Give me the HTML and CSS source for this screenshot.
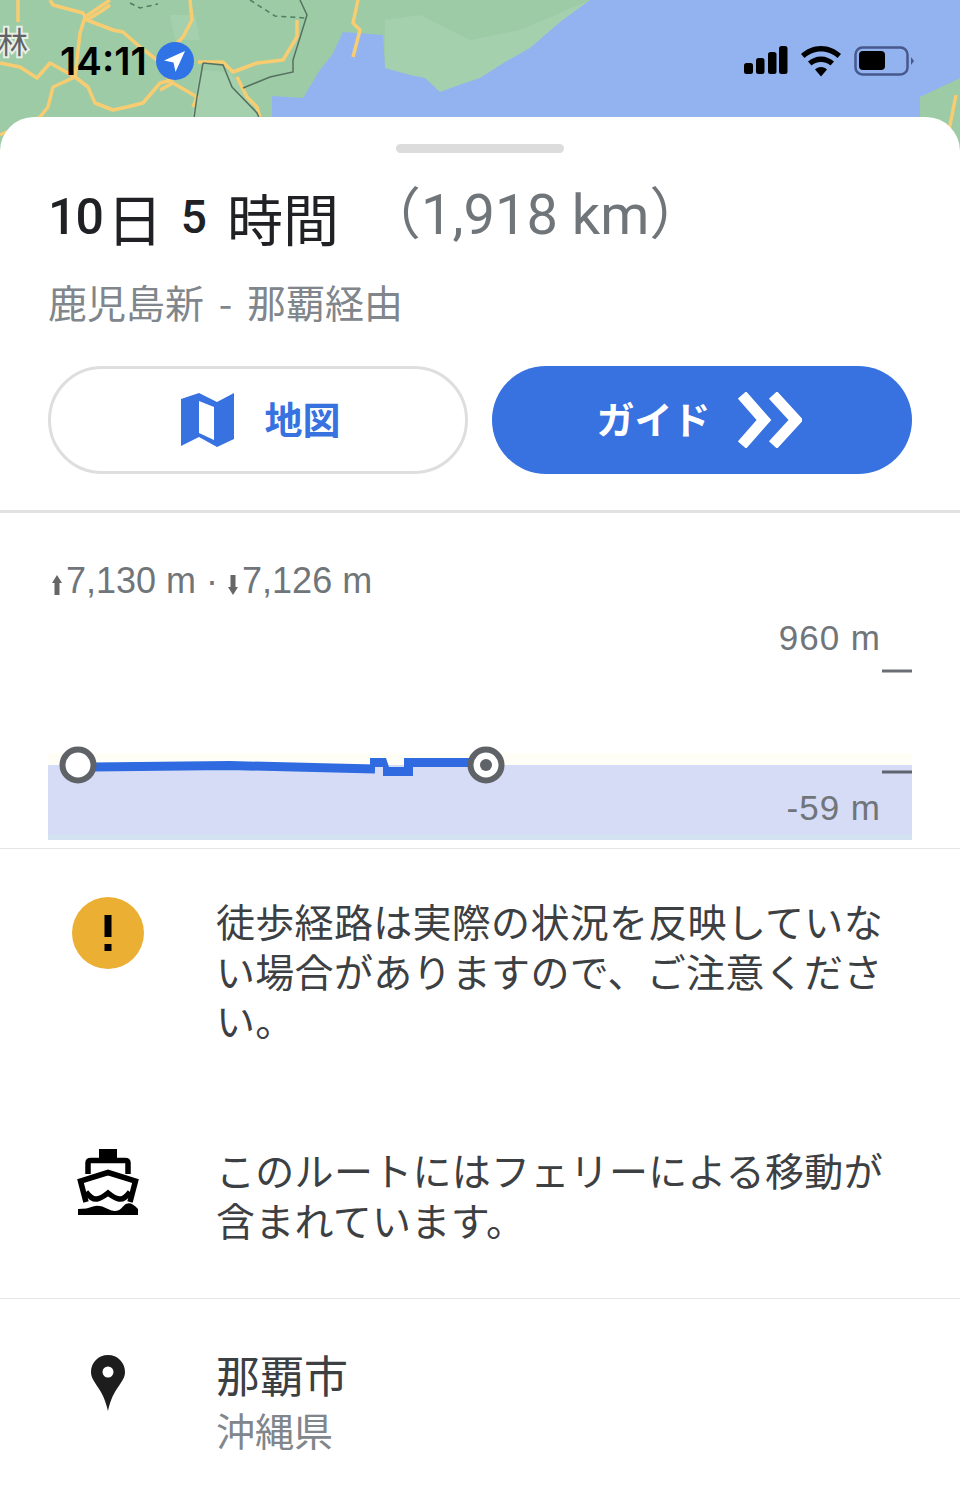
FILE: index.html
```html
<!DOCTYPE html>
<html lang="ja">
<head>
<meta charset="utf-8">
<title>ルート</title>
<link rel="stylesheet" href="styles.css">
</head>
<body>
<header class="map">
  <svg class="map-art" viewBox="0 0 960 160" width="960" height="160" aria-hidden="true">
    <defs><filter id="soft"><feGaussianBlur stdDeviation="0.5"/></filter></defs>
    <g filter="url(#soft)">
    <rect width="960" height="160" fill="#9ccba6"/>
    <path class="land-light" d="M200 70L230 72L250 100L262 125L190 125Z"/>
    <path class="land-light" d="M385 20L420 15L470 40L520 30L590 0L500 75L440 92L385 70Z"/>
    <path class="land-light" d="M170 15L195 15L200 40L175 40Z"/>
    <path class="water" d="M590 0L560 22L530 48L505 62L480 78L462 84L440 92L425 78L410 75L385 68L383 35L343 32L332 55L320 70L303 98L272 96L272 160L920 160L920 97L960 80L960 0Z"/>
    <path class="land" d="M960 78L920 97L920 160L960 160Z"/>
    <g class="road">
      <path d="M50 0L53 5L83 13L87 20L113 30L123 32L140 47L157 60"/>
      <path d="M110 0L85 17L80 33L75 77L53 87L48 107L40 117L0 135"/>
      <path d="M0 63L20 67L37 78L50 63L75 77L88 87L95 103L113 110L127 107L143 103L160 83L173 80"/>
      <path d="M190 0L192 20L183 37L175 45"/>
      <path d="M198 62L223 62L233 72L257 63L283 60L297 37L297 20"/>
      <path d="M237 77L247 97L257 107L262 125"/>
      <path d="M358 0L353 23L360 30L353 57"/>
      <path d="M173 83L197 97L193 107"/>
      <path d="M18 0L18 22"/>
      <path d="M87 20L100 12L110 5"/>
      <path d="M160 70L173 83L160 90"/>
      <path d="M956 95L948 135"/>
    </g>
    <g class="border">
      <path d="M300 0L307 15L293 60L293 72L270 77L243 88"/>
      <path d="M203 63L197 97L193 125"/>
      <path d="M203 63L223 65L232 87L257 113L262 125"/>
    </g>
    <path class="dashed" d="M130 3L140 8L158 4M250 0L275 16L305 18"/>
    </g>
    <text class="map-label" x="-2" y="53">林</text>
  </svg>
  <div class="status">
    <div class="status-left">
      <span class="clock">14:11</span>
      <svg class="loc" viewBox="0 0 38 38" width="38" height="38" aria-hidden="true">
        <circle cx="19" cy="19" r="19" fill="#2f73e6"/>
        <path d="M29 9L8 18.500L17.500 20.500L19.500 30Z" fill="#fff"/>
      </svg>
    </div>
    <div class="status-right">
      <svg viewBox="0 0 44 28" width="44" height="28" aria-hidden="true">
        <rect x="0" y="17" width="9" height="11" rx="2.500"/>
        <rect x="12" y="12" width="8.500" height="16" rx="2.500"/>
        <rect x="24" y="6" width="8.500" height="22" rx="2.500"/>
        <rect x="35" y="0" width="8.500" height="28" rx="2.500"/>
      </svg>
      <svg viewBox="0 0 40 31" width="40" height="31" aria-hidden="true">
        <path d="M20 0C12 0 5.500 3 0 8L3.500 12C8 8 13.500 5.500 20 5.500S32 8 36.500 12L40 8C34.500 3 28 0 20 0Z"/>
        <path d="M20 10.500C15 10.500 10.500 12.500 7 15.500L10.500 19.500C13 17.500 16 16 20 16S27 17.500 29.500 19.500L33 15.500C29.500 12.500 25 10.500 20 10.500Z"/>
        <path d="M20 21C17.500 21 15.500 22 14 23.500L20 30.500L26 23.500C24.500 22 22.500 21 20 21Z"/>
      </svg>
      <svg viewBox="0 0 60 30" width="60" height="30" aria-hidden="true">
        <rect x="1.500" y="1.500" width="52" height="27" rx="7" fill="none" stroke="#46588c" stroke-width="2.500"/>
        <rect x="5" y="5" width="26" height="19" rx="4"/>
        <path d="M57 11L60 15L57 19Z" fill="#46588c"/>
      </svg>
    </div>
  </div>
</header>

<main class="sheet">
  <div class="handle"></div>

  <section class="summary">
    <h1 class="title"><span class="num">10</span><span class="day">日</span><span class="num five">5</span><span>時間</span><span class="distance">（1,918 km）</span></h1>
    <p class="via">鹿児島新 - 那覇経由</p>
    <div class="actions">
      <button class="btn btn-map" type="button">
        <svg viewBox="0 0 54 56" width="54" height="56" aria-hidden="true">
          <path fill-rule="evenodd" d="M0 7L18 1L36 10L53 1V47L36 55L18 45L0 54ZM18 9V41L33 48V15Z" fill="#3871e0"/>
        </svg>
        <span class="btn-label">地図</span>
      </button>
      <button class="btn btn-guide" type="button">
        <span class="btn-label">ガイド</span>
        <svg viewBox="0 0 64 56" width="64" height="56" aria-hidden="true">
          <path d="M4 3L26 28L4 53" fill="none" stroke="#fff" stroke-width="11"/>
          <path d="M35 3L58 28L35 53" fill="none" stroke="#fff" stroke-width="11"/>
        </svg>
      </button>
    </div>
  </section>

  <section class="elevation">
    <p class="stats"><svg class="arrow" viewBox="0 0 10 20" width="10" height="20" aria-hidden="true"><path d="M5 0L10 8H7.500V20H2.500V8H0Z"/></svg>7,130 m · <svg class="arrow" viewBox="0 0 10 20" width="10" height="20" aria-hidden="true"><path d="M5 20L10 12H7.500V0H2.500V12H0Z"/></svg>7,126 m</p>
    <div class="chart">
      <svg viewBox="0 0 960 230" width="960" height="230" aria-hidden="true">
        <rect x="48" y="143" width="864" height="12" fill="#fffef6"/>
        <rect x="48" y="155" width="864" height="70" fill="#d6dcf6"/>
        <rect x="48" y="225" width="864" height="5" fill="#d2e2f0"/>
        <rect x="882" y="59.500" width="30" height="3" fill="#6b6f75"/>
        <rect x="882" y="160.500" width="30" height="3" fill="#5f6670"/>
        <path d="M92 157L230 155.500L375 159" fill="none" stroke="#2f6ae0" stroke-width="9"/>
        <path d="M370 148H386L389 157H412V166H383V157H370ZM404 148H472V157H413V166H404Z" fill="#2f6ae0"/>
        <circle cx="78" cy="155" r="15.500" fill="#fff" stroke="#5f6368" stroke-width="6"/>
        <circle cx="486" cy="155" r="15.500" fill="#fff" stroke="#5f6368" stroke-width="6"/>
        <circle cx="486" cy="155" r="6" fill="#5f6368"/>
      </svg>
      <span class="chart-label chart-max">960 m</span>
      <span class="chart-label chart-min">-59 m</span>
    </div>
  </section>

  <section class="notes">
    <div class="row row-warning">
      <div class="row-icon">
        <svg class="warn" viewBox="0 0 72 72" width="72" height="72" aria-hidden="true">
          <circle cx="36" cy="36" r="36" fill="#ebb033"/>
          <rect x="32.500" y="18" width="7" height="22" fill="#000"/>
          <rect x="32.500" y="47" width="7" height="7" fill="#000"/>
        </svg>
      </div>
      <p class="row-text">徒歩経路は実際の状況を反映していない場合がありますので、ご注意ください。</p>
    </div>
    <div class="row row-ferry">
      <div class="row-icon">
        <svg viewBox="0 0 62 68" width="62" height="68" aria-hidden="true">
          <path d="M22 0H40V10H22Z"/>
          <path d="M11 25V14Q11 11.500 14 11.500H48Q51 11.500 51 14V25" fill="none" stroke="#000" stroke-width="5.500"/>
          <path d="M9 53L3.500 32L31 23.500L58.500 32L53 53" fill="none" stroke="#000" stroke-width="5.500"/>
          <path d="M9 43Q15 51 20 50Q25 49 31 44Q37 49 42 50Q47 51 53 43" fill="none" stroke="#000" stroke-width="5.500"/>
          <path d="M1 60Q10 60 16 57.500T31 60T46 57.500T61 60V66H1Z" fill="#000"/>
        </svg>
      </div>
      <p class="row-text">このルートにはフェリーによる移動が含まれています。</p>
    </div>
  </section>

  <section class="destination">
    <div class="row-icon">
      <svg viewBox="0 0 34 56" width="34" height="56" aria-hidden="true">
        <path fill-rule="evenodd" d="M17 0C7.500 0 0 7.500 0 17C0 28 12 32 17 56C22 32 34 28 34 17C34 7.500 26.500 0 17 0ZM17 11.500A5.500 5.500 0 1 1 17 22.500A5.500 5.500 0 1 1 17 11.500Z" fill="#1d1d1d"/>
      </svg>
    </div>
    <div class="dest-text">
      <p class="dest-name">那覇市</p>
      <p class="dest-region">沖縄県</p>
    </div>
  </section>
</main>
</body>
</html>
```

FILE: styles.css
```css
* { box-sizing: border-box; }
html, body { margin: 0; padding: 0; }
body {
  width: 960px;
  height: 1487px;
  overflow: hidden;
  background: #fff;
  font-family: "Noto Sans CJK JP", "Noto Sans", sans-serif;
  color: #202124;
}
p, h1 { margin: 0; font-weight: 400; }

/* map + status bar */
.map { position: relative; height: 117px; }
.map-art { position: absolute; left: 0; top: 0; display: block; }
.water { fill: #92b3f0; }
.land { fill: #9ccba6; }
.land-light { fill: #a4d0ad; }
.road path { fill: none; stroke: #f8cd72; stroke-width: 3.500; stroke-linejoin: round; }
.border path { fill: none; stroke: #56705f; stroke-width: 1.500; }
.dashed { fill: none; stroke: #4f7f62; stroke-width: 1.500; stroke-dasharray: 5 4; }
.map-label { font-size: 30px; fill: #5f6368; stroke: #e8f0e6; stroke-width: 4px; paint-order: stroke; }

.status {
  position: relative;
  height: 117px;
  display: flex;
  justify-content: space-between;
  padding: 42px 46px 0 60px;
}
.status-left { display: flex; align-items: flex-start; gap: 9px; }
.clock { font-family: "Inter", sans-serif; font-weight: 600; font-size: 38.500px; line-height: 38px; color: #000; }
.loc { display: block; }
.status-right { display: flex; align-items: flex-start; gap: 13px; padding-top: 4px; }
.status-right svg { display: block; }

/* sheet */
.sheet {
  position: relative;
  background: #fff;
  border-radius: 34px 34px 0 0;
  height: 1370px;
  padding-top: 27px;
}
.handle { width: 168px; height: 9px; margin: 0 auto; background: #dcdcdc; border-radius: 5px; }

.summary { padding: 26px 48px 36px; border-bottom: 3px solid #e2e2e2; }
.title { display: flex; align-items: center; height: 76px; white-space: pre; font-size: 56px; line-height: 76px; }
.num { font-family: "Roboto", sans-serif; font-size: 50px; font-weight: 500; letter-spacing: -1px; }
.day { margin: 0 18px 0 4px; }
.five { font-size: 46px; margin-right: 21px; }
.distance { color: #70757a; font-family: "Roboto", "Noto Sans CJK JP", sans-serif; font-size: 56px; position: relative; top: -2px; margin-left: 26px; }
.via { margin-top: 21px; font-size: 39px; line-height: 50px; color: #80868b; word-spacing: 6px; }

.actions { display: flex; gap: 24px; margin-top: 40px; }
.btn {
  flex: 0 0 auto;
  height: 108px;
  border-radius: 54px;
  display: flex;
  align-items: center;
  justify-content: center;
  font-family: "Noto Sans CJK JP", sans-serif;
  font-weight: 700;
  font-size: 38px;
}
.btn-label { padding-bottom: 6px; }
.btn-map { width: 420px; gap: 29px; border: 3px solid #dedede; background: #fff; color: #3871e0; padding: 0 0 0 6px; }
.btn-guide { width: 420px; gap: 27px; border: 0; background: #3871e0; color: #fff; padding: 0 6px 0 0; }
.btn svg { display: block; }

/* elevation */
.elevation { padding-top: 43px; border-bottom: 1px solid #e6e6e6; height: 336px; }
.stats { padding-left: 52px; font-family: "Liberation Sans", sans-serif; font-size: 36px; line-height: 50px; color: #70757a; white-space: pre; }
.arrow { fill: #666; vertical-align: -2px; margin-right: 4px; }
.chart { position: relative; height: 230px; margin-top: 4px; }
.chart svg { display: block; }
.chart-label { position: absolute; right: 79px; font-family: "Liberation Sans", sans-serif; font-size: 35px; line-height: 40px; color: #70757a; letter-spacing: 1px; }
.chart-max { top: 8px; }
.chart-min { top: 178px; }

/* notes */
.notes { border-bottom: 1px solid #e6e6e6; height: 450px; padding-top: 48px; }
.row { display: flex; }
.row-icon { flex: 0 0 216px; display: flex; align-items: flex-start; }
.row-text { width: 680px; font-size: 39px; line-height: 49.500px; letter-spacing: 0.3px; color: #3c4043; }
.row-warning { height: 248px; }
.row-warning .row-icon { padding-left: 72px; }
.warn { display: block; }
.row-ferry .row-icon { padding-left: 77px; padding-top: 4px; }
.row-ferry svg { display: block; }
.row-warning .row-text { margin-top: -1px; }
.row-ferry .row-text { margin-top: 0; }

.destination { display: flex; padding-top: 46px; }
.destination .row-icon { padding-left: 91px; padding-top: 10px; }
.destination svg { display: block; }
.dest-name { font-size: 44px; line-height: 58px; color: #3c4043; }
.dest-region { font-size: 39px; line-height: 52px; color: #80868b; }
```
